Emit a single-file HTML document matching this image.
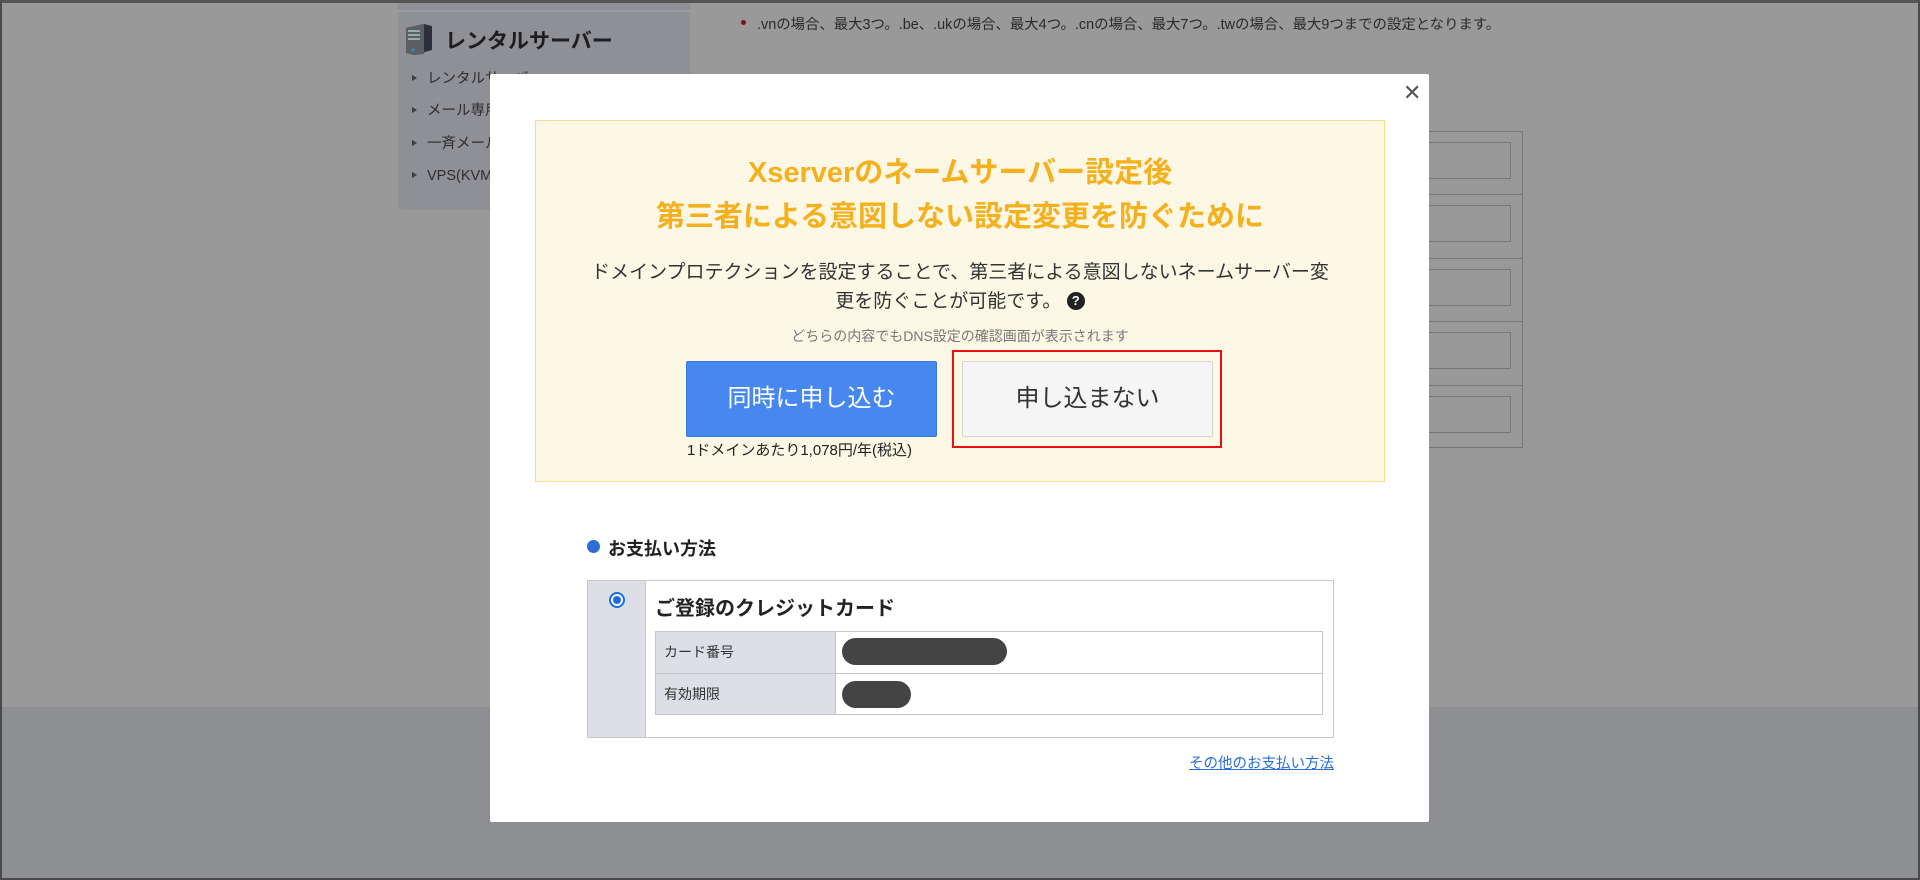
<!DOCTYPE html>
<html><head><meta charset="utf-8"><style>
*{margin:0;padding:0;box-sizing:border-box}
body{width:1920px;height:880px;position:relative;overflow:hidden;background:#999;font-family:"Liberation Sans","Noto Sans CJK JP",sans-serif;}
.a{position:absolute}
.frame{position:absolute;left:0;top:0;width:1920px;height:880px;border:2px solid #4a4a4a;border-top:3px solid #555;pointer-events:none;z-index:50}
.side{left:398px;top:0;width:292px;height:210px;background:#8f9095;border-radius:0 0 4px 4px}
.side .ln{position:absolute;left:0;top:10px;width:292px;height:2px;background:#9c9da1}
.li{position:absolute;left:14px;font-size:14.5px;line-height:18px;color:#2e2e30;white-space:nowrap}
.li:before{content:"";display:inline-block;border-left:5px solid #3a3d3d;border-top:3.5px solid transparent;border-bottom:3.5px solid transparent;margin-right:10px;vertical-align:2px}
.modal{left:490px;top:74px;width:939px;height:748px;background:#fff;border-radius:2px}
.yb{left:45px;top:46px;width:850px;height:362px;background:#fdf8e6;border:1px solid #f3dd8a}
.t{position:absolute;left:0;width:100%;text-align:center;white-space:nowrap}
</style></head><body>
<div class="a" style="left:0;top:707px;width:1920px;height:173px;background:#8e8f93"></div>
<div class="a side"><div class="ln"></div>
<svg class="a" style="left:6px;top:22px" width="30" height="34" viewBox="0 0 30 34"><path d="M2 6 L20 2 L28 4 L28 28 L10 33 L2 31Z" fill="#2a2f3a"/><path d="M2 6 L20 2 L20 32 L10 33 L2 31Z" fill="#5a5f66"/><rect x="4" y="8" width="12" height="2" fill="#9aa"/><rect x="4" y="12" width="12" height="2" fill="#9aa"/><rect x="4" y="16" width="12" height="2" fill="#9aa"/><circle cx="9" cy="28" r="1.6" fill="#2a8fc0"/></svg>
<div class="a" style="left:47px;top:25px;font-size:21px;font-weight:bold;color:#1e1e20;white-space:nowrap">レンタルサーバー</div>
<div class="li" style="top:70px">レンタルサーバー</div>
<div class="li" style="top:102px">メール専用</div>
<div class="li" style="top:135px">一斉メール</div>
<div class="li" style="top:167px">VPS(KVM)</div>
</div>
<div class="a" style="left:741px;top:20px;width:5px;height:5px;border-radius:50%;background:#8a1010"></div>
<div class="a" style="left:757px;top:13px;font-size:14.4px;color:#2a2a2a;white-space:nowrap">.vnの場合、最大3つ。.be、.ukの場合、最大4つ。.cnの場合、最大7つ。.twの場合、最大9つまでの設定となります。</div>
<div class="a" style="left:1380px;top:131px;width:143px;height:317px;border:1px solid #777"></div>
<div class="a" style="left:1380px;top:194px;width:143px;height:1px;background:#777"></div>
<div class="a" style="left:1380px;top:258px;width:143px;height:1px;background:#777"></div>
<div class="a" style="left:1380px;top:321px;width:143px;height:1px;background:#777"></div>
<div class="a" style="left:1380px;top:385px;width:143px;height:1px;background:#777"></div>
<div class="a" style="left:1400px;top:142px;width:111px;height:37px;border:1px solid #777"></div>
<div class="a" style="left:1400px;top:205px;width:111px;height:37px;border:1px solid #777"></div>
<div class="a" style="left:1400px;top:269px;width:111px;height:37px;border:1px solid #777"></div>
<div class="a" style="left:1400px;top:332px;width:111px;height:37px;border:1px solid #777"></div>
<div class="a" style="left:1400px;top:396px;width:111px;height:37px;border:1px solid #777"></div>

<div class="a modal">
<div class="a" style="left:913px;top:6px;font-size:22px;color:#555;font-weight:300">✕</div>
<div class="a yb">
<div class="t" style="top:30px;font-size:29px;font-weight:bold;color:#f5b01d;line-height:44px">Xserverのネームサーバー設定後<br>第三者による意図しない設定変更を防ぐために</div>
<div class="t" style="top:137px;font-size:19px;color:#333;line-height:29px">ドメインプロテクションを設定することで、第三者による意図しないネームサーバー変<br>更を防ぐことが可能です。 <span style="display:inline-block;width:18px;height:18px;border-radius:50%;background:#222;color:#fff;font-size:13px;line-height:18px;font-weight:bold;vertical-align:2px">?</span></div>
<div class="t" style="top:205px;font-size:14px;color:#777">どちらの内容でもDNS設定の確認画面が表示されます</div>
<div class="a" style="left:150px;top:240px;width:251px;height:76px;background:#4687f0;border:1px solid #3a78dd;border-radius:2px;color:#fff;font-size:24px;text-align:center;line-height:74px">同時に申し込む</div>
<div class="a" style="left:151px;top:318px;font-size:15px;color:#222;white-space:nowrap">1ドメインあたり1,078円/年(税込)</div>
<div class="a" style="left:416px;top:229px;width:270px;height:98px;border:2px solid #e81010"></div>
<div class="a" style="left:426px;top:240px;width:251px;height:76px;background:#f5f5f5;border:1px solid #d5d5d5;border-radius:2px;color:#333;font-size:24px;text-align:center;line-height:74px">申し込まない</div>
</div>
<div class="a" style="left:97px;top:466px;width:13px;height:13px;border-radius:50%;background:#2d6fd6"></div>
<div class="a" style="left:118px;top:461px;font-size:18px;font-weight:bold;color:#222;white-space:nowrap">お支払い方法</div>
<div class="a" style="left:97px;top:506px;width:747px;height:158px;border:1px solid #c8c8c8;background:#fff"></div>
<div class="a" style="left:98px;top:507px;width:58px;height:156px;background:#dce0e6;border-right:1px solid #c8c8c8"></div>
<div class="a" style="left:119px;top:518px;width:16px;height:16px;border-radius:50%;border:2px solid #1a6fe0;background:#fff"><div style="margin:2px;width:8px;height:8px;border-radius:50%;background:#1a6fe0"></div></div>
<div class="a" style="left:165px;top:518px;font-size:20px;font-weight:bold;color:#222;white-space:nowrap">ご登録のクレジットカード</div>
<div class="a" style="left:165px;top:557px;width:668px;height:84px;border:1px solid #c3c3c3"></div>
<div class="a" style="left:166px;top:558px;width:180px;height:82px;background:#dce0e6;border-right:1px solid #c3c3c3"></div>
<div class="a" style="left:166px;top:599px;width:666px;height:1px;background:#c3c3c3"></div>
<div class="a" style="left:174px;top:568px;font-size:14px;color:#333">カード番号</div>
<div class="a" style="left:174px;top:610px;font-size:14px;color:#333">有効期限</div>
<div class="a" style="left:352px;top:564px;width:165px;height:27px;border-radius:14px;background:#444"></div>
<div class="a" style="left:352px;top:607px;width:69px;height:27px;border-radius:14px;background:#444"></div>
<div class="a" style="right:95px;top:678px;font-size:14.5px;color:#2a6fd6;text-decoration:underline;white-space:nowrap">その他のお支払い方法</div>
</div>
<div class="frame"></div>
</body></html>
